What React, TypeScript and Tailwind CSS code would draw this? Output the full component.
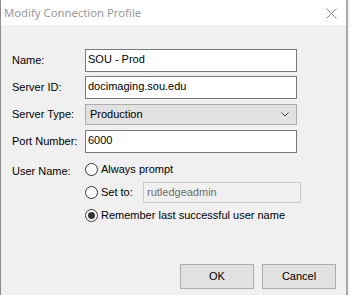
import React from "react";

function Field({ label, children, mt }: { label: string; children: React.ReactNode; mt: string }) {
  return (
    <div className={`flex items-center ${mt}`}>
      <div className="w-[73px] text-[11px] text-black">{label}</div>
      {children}
    </div>
  );
}

function TextBox({ value }: { value: string }) {
  return (
    <div className="w-[212px] h-[23px] bg-white border border-[#7a7a7a] pl-[2px] text-[11px] leading-[19px] text-[#000]">
      {value}
    </div>
  );
}

function Radio({ checked }: { checked?: boolean }) {
  return (
    <div className="w-[13px] h-[13px] rounded-full border border-[#333] bg-white flex items-center justify-center shrink-0">
      {checked && <div className="w-[7px] h-[7px] rounded-full bg-[#333]" />}
    </div>
  );
}

function Button({ children }: { children: React.ReactNode }) {
  return (
    <button className="w-[74px] h-[25px] bg-[#e1e1e1] border border-[#adadad] text-[11px] text-black">
      {children}
    </button>
  );
}

export default function App() {
  return (
    <div
      className="w-[350px] h-[295px] overflow-hidden bg-white flex"
      style={{ fontFamily: '"Liberation Sans", Arial, sans-serif' }}
    >
      <div className="w-[348px] h-full border-l border-r-2 border-l-[#8c8c8c] border-r-[#ababab] flex flex-col">
        {/* title bar */}
        <div className="h-[25px] bg-white flex items-center justify-between pl-[3px] pr-[9px]">
          <span
            className="text-[11.3px] text-[#999] pt-[1px]"
            style={{ fontFamily: '"Noto Sans", "Open Sans", sans-serif' }}
          >
            Modify Connection Profile
          </span>
          <svg width="11" height="11" viewBox="0 0 11 11" className="mt-[1px]">
            <path d="M0.5 0.5 L10.5 10.5 M10.5 0.5 L0.5 10.5" stroke="#8a8a8a" strokeWidth="1" />
          </svg>
        </div>

        {/* body */}
        <div className="flex-1 bg-[#f0f0f0] pl-[11px] pt-[24px] flex flex-col">
          <Field label="Name:" mt="mt-0">
            <TextBox value="SOU - Prod" />
          </Field>
          <Field label="Server ID:" mt="mt-[4px]">
            <TextBox value="docimaging.sou.edu" />
          </Field>
          <Field label="Server Type:" mt="mt-[5px]">
            <div className="w-[212px] h-[21px] bg-[#e1e1e1] border border-[#adadad] pl-[4px] pr-[7px] flex items-center justify-between text-[11px] text-black">
              <span>Production</span>
              <svg width="8" height="5" viewBox="0 0 8 5">
                <path d="M0.5 0.5 L4 4 L7.5 0.5" stroke="#444" strokeWidth="1" fill="none" />
              </svg>
            </div>
          </Field>
          <Field label="Port Number:" mt="mt-[5px]">
            <TextBox value="6000" />
          </Field>

          <div className="flex mt-[9px]">
            <div className="w-[73px] text-[11px] text-black pt-[1px]">User Name:</div>
            <div className="flex flex-col">
              <div className="flex items-center h-[14px] gap-[3px] text-[11px] text-black">
                <Radio />
                <span>Always prompt</span>
              </div>
              <div className="flex items-center mt-[6px] text-[11px] text-black">
                <Radio />
                <span className="ml-[3px] w-[42px]">Set to:</span>
                <div className="w-[158px] h-[21px] border border-[#cccccc] bg-[#f0f0f0] pl-[3px] leading-[19px] text-[#6d6d6d]">
                  rutledgeadmin
                </div>
              </div>
              <div className="flex items-center gap-[3px] mt-[4px] text-[11px] text-black">
                <Radio checked />
                <span>Remember last successful user name</span>
              </div>
            </div>
          </div>

          <div className="flex-1" />
          <div className="flex justify-end gap-[8px] pr-[10px] pb-[6px]">
            <Button>OK</Button>
            <Button>Cancel</Button>
          </div>
        </div>
      </div>
      <div className="flex-1 bg-[#f6f6f6]" />
    </div>
  );
}
